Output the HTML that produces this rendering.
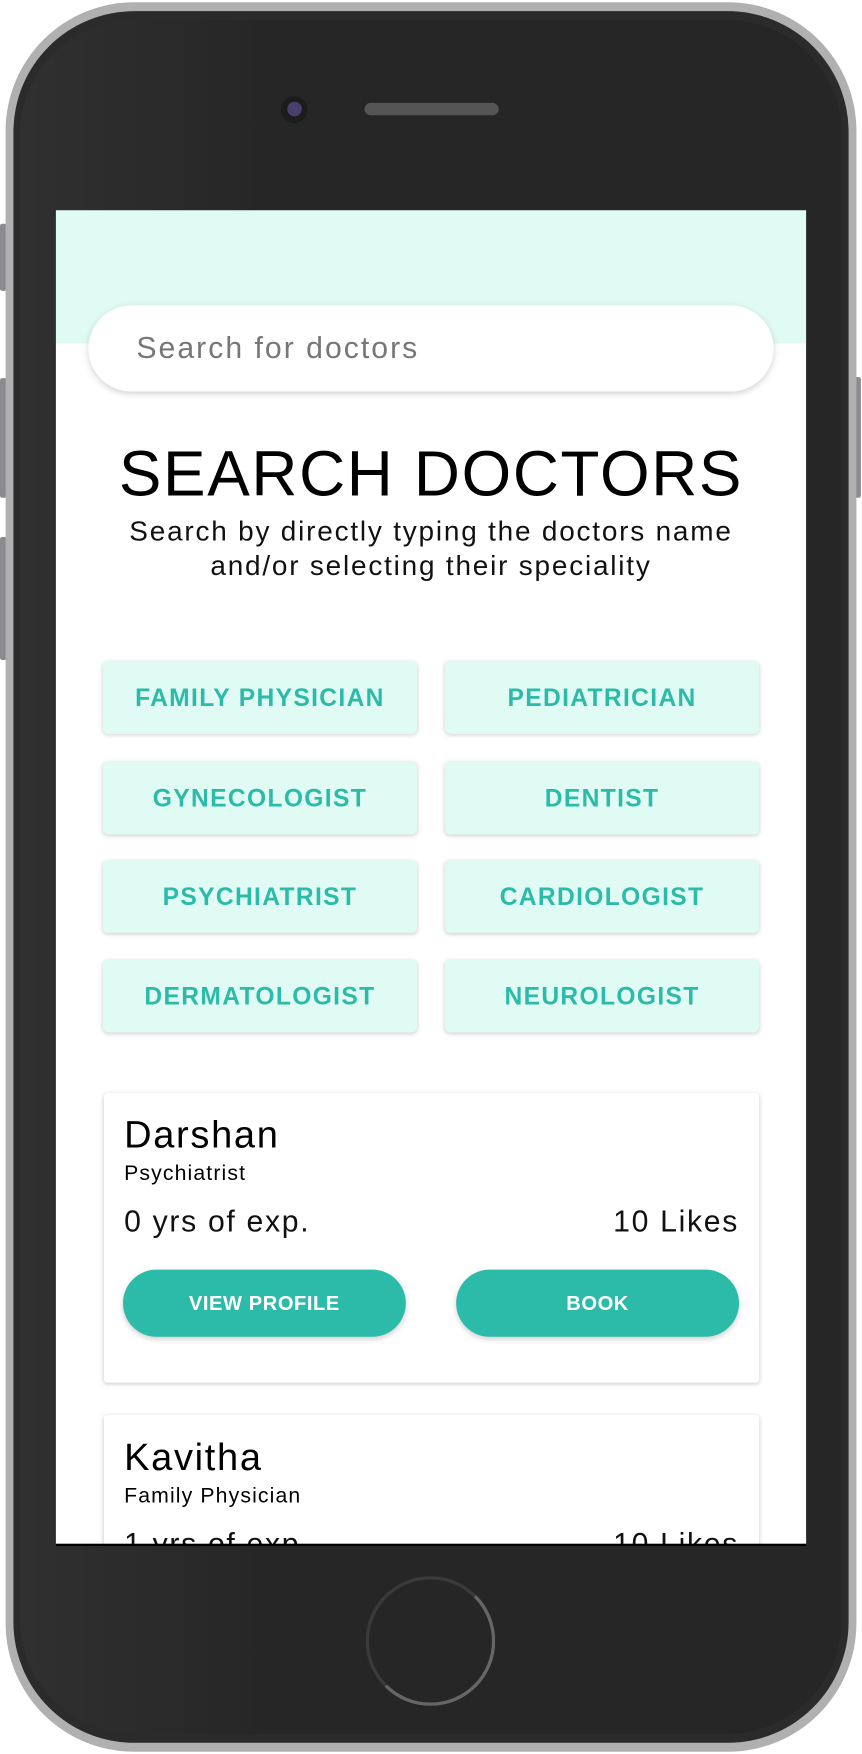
<!DOCTYPE html>
<html><head><meta charset="utf-8"><style>
html,body{margin:0;padding:0;background:#fff;width:862px;height:1754px;overflow:hidden}
#w{position:absolute;left:0;top:0;width:771px;height:1568px;transform:scale(1.11803,1.11862);transform-origin:0 0;font-family:"Liberation Sans",sans-serif}
.a{position:absolute}
.chip{position:absolute;width:281px;height:65px;background:#e0fbf4;border-radius:5px;box-shadow:0 1px 4px rgba(0,0,0,.18);color:#2cbba8;font-weight:bold;font-size:22px;display:flex;align-items:center;justify-content:center;letter-spacing:1.2px}
.card{position:absolute;left:93px;width:586px;background:#fff;box-shadow:0 1px 4px rgba(0,0,0,.2);border-radius:3px}
.btn{position:absolute;top:158px;width:253px;height:60px;border-radius:30px;background:#2dbba9;color:#fff;font-weight:bold;font-size:18px;display:flex;align-items:center;justify-content:center;box-shadow:0 2px 5px rgba(0,0,0,.2);letter-spacing:.5px}
.nm{position:absolute;left:18px;font-size:34px;color:#000;letter-spacing:1.5px}
.sp{position:absolute;left:18px;font-size:19px;color:#000;letter-spacing:1px}
.ln{position:absolute;left:18px;right:18px;font-size:27px;color:#111;display:flex;justify-content:space-between;letter-spacing:1.5px}
</style></head><body><div id="w">
<div class="a" style="left:0;top:200px;width:6px;height:60px;background:#8a8a90;border-radius:2px"></div>
<div class="a" style="left:0;top:338px;width:6px;height:107px;background:#8a8a90;border-radius:2px"></div>
<div class="a" style="left:0;top:480px;width:6px;height:110px;background:#8a8a90;border-radius:2px"></div>
<div class="a" style="left:763px;top:337px;width:7px;height:108px;background:#8a8a90;border-radius:2px"></div>
<div class="a" style="left:5px;top:2px;width:761px;height:1564px;background:#b0b0b0;border-radius:115px"></div>
<div class="a" style="left:12px;top:10px;width:747px;height:1548px;background:#2b2b2b;border-radius:108px"></div>
<div class="a" style="left:18px;top:18px;width:735px;height:1532px;background:linear-gradient(90deg,#303030,#262626 30%);border-radius:102px"></div>
<div class="a" style="left:251px;top:86px;width:24px;height:24px;border-radius:50%;background:#1c1c1c"></div>
<div class="a" style="left:257px;top:91px;width:13px;height:13px;border-radius:50%;background:#4a3f6a"></div>
<div class="a" style="left:326px;top:92px;width:120px;height:11px;border-radius:6px;background:#555"></div>
<div class="a" style="left:50px;top:188px;width:671px;height:1193px;background:#fff;overflow:hidden">
 <div class="a" style="left:0;top:0;width:671px;height:119px;background:#e0fbf4"></div>
 <div class="a" style="left:29px;top:85px;width:613px;height:77px;background:#fff;border-radius:39px;box-shadow:0 2px 6px rgba(0,0,0,.18)"></div>
 <div class="a" style="left:72px;top:108px;font-size:27px;color:#777;letter-spacing:1.8px">Search for doctors</div>
 <div class="a" style="left:0;width:671px;top:203px;text-align:center;font-size:57px;color:#000;letter-spacing:1.5px">SEARCH DOCTORS</div>
 <div class="a" style="left:0;width:671px;top:272px;text-align:center;font-size:25px;line-height:31px;color:#111;letter-spacing:1.6px">Search by directly typing the doctors name<br>and/or selecting their speciality</div>
 <div class="chip" style="left:42px;top:403px">FAMILY PHYSICIAN</div>
 <div class="chip" style="left:348px;top:403px">PEDIATRICIAN</div>
 <div class="chip" style="left:42px;top:493px">GYNECOLOGIST</div>
 <div class="chip" style="left:348px;top:493px">DENTIST</div>
 <div class="chip" style="left:42px;top:581px">PSYCHIATRIST</div>
 <div class="chip" style="left:348px;top:581px">CARDIOLOGIST</div>
 <div class="chip" style="left:42px;top:670px">DERMATOLOGIST</div>
 <div class="chip" style="left:348px;top:670px">NEUROLOGIST</div>
 <div class="card" style="left:43px;top:789px;height:259px">
  <div class="nm" style="top:19px">Darshan</div>
  <div class="sp" style="top:62px">Psychiatrist</div>
  <div class="ln" style="top:100px"><span>0 yrs of exp.</span><span>10 Likes</span></div>
  <div class="btn" style="left:17px">VIEW PROFILE</div>
  <div class="btn" style="left:315px">BOOK</div>
 </div>
 <div class="card" style="left:43px;top:1077px;height:200px">
  <div class="nm" style="top:19px">Kavitha</div>
  <div class="sp" style="top:62px">Family Physician</div>
  <div class="ln" style="top:100px"><span>1 yrs of exp.</span><span>10 Likes</span></div>
 </div>
</div>
<div class="a" style="left:50px;top:1380px;width:671px;height:2px;background:#000"></div>
<div class="a" style="left:327px;top:1409px;width:116px;height:116px;border-radius:50%;box-sizing:border-box;border:3px solid #3a3a3a;border-right-color:#666;border-bottom-color:#666"></div>
</div></body></html>
